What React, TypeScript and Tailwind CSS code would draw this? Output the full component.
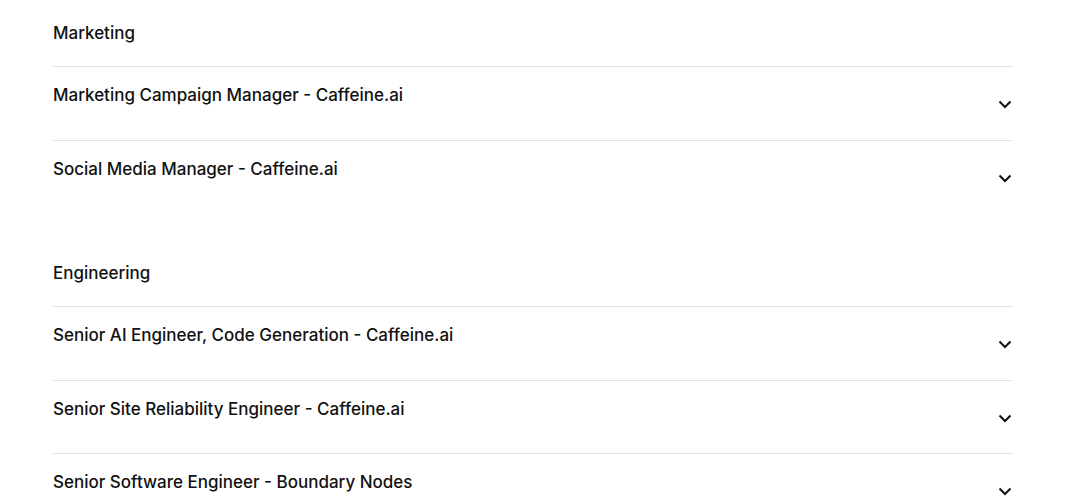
const sections = [
  {
    name: 'Marketing',
    jobs: ['Marketing Campaign Manager - Caffeine.ai', 'Social Media Manager - Caffeine.ai'],
  },
  {
    name: 'Engineering',
    jobs: [
      'Senior AI Engineer, Code Generation - Caffeine.ai',
      'Senior Site Reliability Engineer - Caffeine.ai',
      'Senior Software Engineer - Boundary Nodes',
    ],
  },
];

function Chevron() {
  return (
    <svg width="16" height="16" viewBox="0 0 16 16" fill="none" className="mt-[13px] shrink-0">
      <path d="M2.5 5.5 8 11l5.5-5.5" stroke="#111" strokeWidth="2" />
    </svg>
  );
}

export default function App() {
  return (
    <div className="h-[500px] overflow-hidden bg-white text-[#111] font-['Inter',sans-serif] font-medium">
      <div className="w-[960px] ml-[53px] flex flex-col gap-[27px]">
        {sections.map((s) => (
          <section key={s.name}>
            <h2 className="py-[21px] text-[17px] leading-6">{s.name}</h2>
            {s.jobs.map((job) => (
              <div key={job} className="border-t border-[#e2e2e2] h-[73.5px] pt-4 flex justify-between items-start">
                <span className="text-[17px] leading-6">{job}</span>
                <Chevron />
              </div>
            ))}
          </section>
        ))}
      </div>
    </div>
  );
}
